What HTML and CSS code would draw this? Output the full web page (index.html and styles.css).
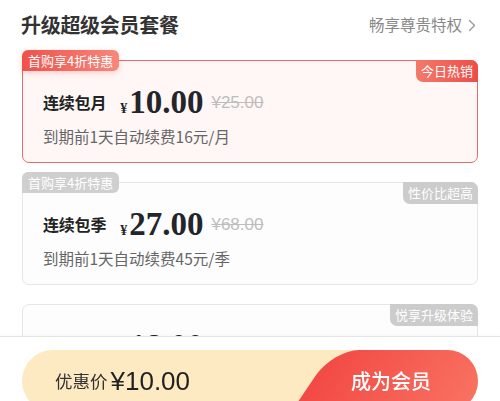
FILE: index.html
```html
<!DOCTYPE html>
<html lang="zh-CN">
<head>
<meta charset="utf-8">
<title>升级超级会员套餐</title>
<link rel="stylesheet" href="styles.css">
</head>
<body>
<div class="page">
  <header class="head">
    <h1 class="title">升级超级会员套餐</h1>
    <a class="more">畅享尊贵特权<svg class="chev" width="8" height="13" viewBox="0 0 8 13"><polyline points="1.5,1.5 6.5,6.5 1.5,11.5" fill="none" stroke="#999" stroke-width="1.4" stroke-linecap="round" stroke-linejoin="round"/></svg></a>
  </header>
  <div class="plans">
    <div class="plan plan-active">
      <span class="tag-left">首购享4折特惠</span>
      <span class="tag-right">今日热销</span>
      <div class="row">
        <span class="name">连续包月</span>
        <span class="price"><span class="yen">¥</span>10.00</span>
        <span class="orig">¥25.00</span>
      </div>
      <div class="desc">到期前1天自动续费16元/月</div>
    </div>
    <div class="plan">
      <span class="tag-left">首购享4折特惠</span>
      <span class="tag-right">性价比超高</span>
      <div class="row">
        <span class="name">连续包季</span>
        <span class="price"><span class="yen">¥</span>27.00</span>
        <span class="orig">¥68.00</span>
      </div>
      <div class="desc">到期前1天自动续费45元/季</div>
    </div>
    <div class="plan">
      <span class="tag-right">悦享升级体验</span>
      <div class="row">
        <span class="name">连续包年</span>
        <span class="price"><span class="yen">¥</span>18.00</span>
        <span class="orig">¥98.00</span>
      </div>
    </div>
  </div>
</div>
<div class="bar">
  <div class="pill">
    <div class="deal"><span class="deal-label">优惠价</span><span class="deal-price">¥10.00</span></div>
    <div class="join"><span class="join-text">成为会员</span></div>
  </div>
</div>
</body>
</html>
```

FILE: styles.css
```css
* { box-sizing: border-box; margin: 0; padding: 0; }
html, body { height: 100%; overflow: hidden; background: #fff; }
body { font-family: "Noto Sans CJK SC", "Noto Sans", sans-serif; color: #333; }

.page { padding: 0 22px; }

.head { height: 50px; display: flex; align-items: center; justify-content: space-between; }
.title { margin-left: -1px; font-size: 20px; font-weight: 600; color: #333; line-height: 1; letter-spacing: -0.3px; }
.more { display: flex; align-items: center; font-size: 15.5px; line-height: 1; color: #888; margin-right: 2px; }
.chev { margin-left: 6px; }

.plans { margin-top: 10px; display: flex; flex-direction: column; gap: 19px; }

.plan { position: relative; height: 103px; border: 1px solid #e6e6e6; border-radius: 7px; background: #fdfdfd; padding: 22px 20px 0; }
.plan-active { border-color: #ea6b67; background: #fff7f6; }

.row { display: flex; align-items: center; height: 38px; }
.name { font-size: 16px; font-weight: 600; color: #222; line-height: 1; letter-spacing: -0.2px; }
.price { margin-left: 14px; font-family: "Liberation Serif", serif; font-weight: 700; font-size: 33px; color: #23252b; line-height: 1; }
.yen { font-size: 14px; margin-right: 2px; }
.orig { margin-left: 8px; font-family: "Liberation Sans", sans-serif; font-size: 17px; color: #bdbdbd; text-decoration: line-through; line-height: 1; }
.desc { margin-top: 4px; font-size: 15.5px; line-height: 22px; color: #666; }

.tag-left { position: absolute; left: -1px; top: -11px; height: 21px; padding: 0 6px; font-size: 13px; line-height: 21px; color: #fff; background: #cfcfcf; border-radius: 6px 6px 6px 0; }
.plan-active .tag-left { background: linear-gradient(90deg, #f0524a, #f7877c); box-shadow: 0 2px 6px rgba(240, 90, 80, 0.25); }
.tag-right { position: absolute; right: -1px; top: -1px; height: 22px; padding: 0 5px; font-size: 13px; line-height: 22px; color: #fff; background: #cccccc; border-radius: 0 7px 0 7px; }
.plan-active .tag-right { background: linear-gradient(90deg, #f37a6b, #ee4d47); }

.bar { position: fixed; left: 0; right: 0; bottom: -16px; height: 81px; background: #fff; border-top: 1px solid #e6e6e6; padding: 13px 22px 0; box-shadow: 0 -1px 4px rgba(0, 0, 0, 0.03); }
.pill { display: flex; height: 62px; border-radius: 31px; overflow: hidden; background: #fdeac3; }
.deal { flex: 1; display: flex; align-items: center; gap: 3px; padding-left: 33px; }
.deal-label { font-size: 17.5px; color: #333; line-height: 1; }
.deal-price { font-family: "Liberation Sans", sans-serif; font-size: 26px; color: #222; line-height: 1; }
.join { position: relative; width: 198px; display: flex; align-items: center; justify-content: center; padding-left: 24px; }
.join::before { content: ""; position: absolute; top: 0; bottom: 0; left: 32px; right: -50px; background: linear-gradient(90deg, #f24a45, #fa7b68); transform: skewX(-34deg); border-radius: 26px 0 0 0; }
.join-text { position: relative; color: #fff; font-size: 20px; font-weight: 500; line-height: 1; }
```
